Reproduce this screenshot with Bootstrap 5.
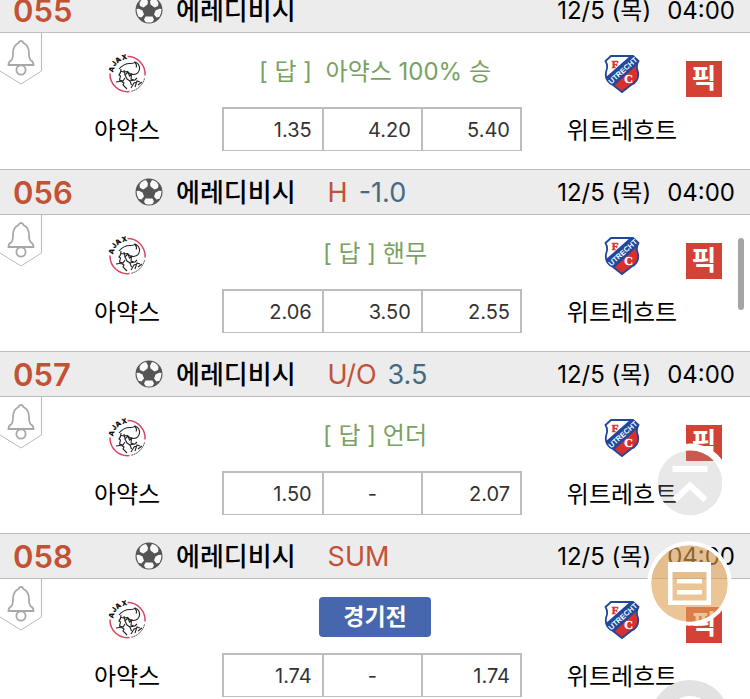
<!DOCTYPE html>
<html lang="ko">
<head>
<meta charset="utf-8">
<meta name="viewport" content="width=device-width, initial-scale=1">
<title>에레디비시</title>
<link href="https://cdn.jsdelivr.net/npm/bootstrap@5.3.0/dist/css/bootstrap.min.css" rel="stylesheet">
<style>
body{font-family:Inter,"Noto Sans CJK KR",sans-serif;color:#000;background:#fff}
.screen{height:100vh;overflow:hidden}
.match-list{margin-top:-13px}
.match-head{height:46px;padding:0 15px 0 13px;background:#ececec;border-top:1px solid #bdbdbd;border-bottom:1px solid #bdbdbd;line-height:42px}
.match-head span,.match-head time{padding-top:2px}
.match-no{width:122px;font-size:31px;font-weight:600;color:#c35135}
.league{font-size:26px;font-weight:500;margin-left:13px}
.market{font-size:27px;color:#c35135;margin-left:32px}
.market-line{font-size:27px;color:#456a80;margin-left:11px}
.kickoff{font-size:24px}
.match-body{height:136px;display:grid;grid-template-columns:37fr 50fr 38fr}
.home-team{padding:21px 0 0 32px}
.away-team{padding:21px 0 0 36px}
.team-name{font-size:24px;line-height:36px;margin-top:19px}
.bell-tab{position:absolute;left:0;top:0;line-height:0}
.answer{height:74px;font-size:24px;color:#79a15f;line-height:78px}
.answer-space{padding-left:6px}
.status-btn{width:112px;height:40px;margin:18px 0 16px 6px;background:#4667ae;border-radius:4px;font-size:23px;font-weight:700;line-height:40px}
.odds{height:44px;border:solid #bdbdbd;border-width:2px 2px 1px}
.odds button+button{border-left:2px solid #bdbdbd}
.odds button{font-size:20px;color:#333;padding:0 10px}
.pick{width:36px;height:36px;margin:28px 28px 0 0;background:#d44235;font-size:27px;font-weight:700;line-height:34px}
.floats{position:fixed;right:18px;bottom:-61px;width:85px}
.floats button{line-height:0}
.float-list{margin-top:18px;margin-bottom:54px}
.scroll-thumb{position:fixed;right:6px;top:238px;width:6px;height:72px;border-radius:3px;background:#a5a5a5}
</style>
<script src="https://cdn.jsdelivr.net/npm/bootstrap@5.3.0/dist/js/bootstrap.bundle.min.js"></script>
</head>
<body>
<svg class="position-absolute" width="0" height="0" aria-hidden="true">
  <defs><clipPath id="shield"><path d="M7 2H29L34.500 7Q31.500 12 34 18 35.500 27 27 31L18 38 9 31Q.5 27 2 18 4.500 12 1.500 7z"/></clipPath></defs>
  <symbol id="ball" viewBox="0 0 28 28">
    <circle cx="14" cy="14" r="13.500" fill="#555"/>
    <g fill="#fafafa"><path d="M6 4.500Q8.500 2 11 2L13 5.500 12.500 8.500 8.500 11.500 5 10 4.500 7z"/><path d="M22 4.500Q19.500 2 17 2L15 5.500 15.500 8.500 19.500 11.500 23 10 23.500 7z"/><path d="M1.500 13L4 12.800 7.500 14.500 9 18.500 6.500 21.500 3.500 20.800Q1.500 17.500 1.500 13z"/><path d="M26.500 13L24 12.800 20.500 14.500 19 18.500 21.500 21.500 24.500 20.800Q26.500 17.500 26.500 13z"/><path d="M10.500 20.500H17.500L19 23.500 17.500 26Q14 27.200 10.500 26L9 23.500z"/></g>
  </symbol>
  <symbol id="bell" viewBox="0 0 42 52">
    <path d="M41.500 0V38L21 51 0 38" fill="#fff" stroke="#b9b9b9"/>
    <g fill="none" stroke="#a8a8a8" stroke-width="1.800"><path d="M21 8q2 0 2.500 2Q29 12.500 29 20q0 6 2 7.500 2.500 1.200 2.500 4.500H8.500q0-3.300 2.500-4.500 2-1.500 2-7.500 0-7.500 5.500-10 .5-2 2.500-2z"/><circle cx="21" cy="37" r="4.600"/></g>
  </symbol>
  <symbol id="ajax" viewBox="0 0 40 40">
    <path d="M20.500 2.500A17.500 17.500 0 0 1 38 21.500M3 19.500A17.500 17.500 0 0 0 22.500 37.500" fill="none" stroke="#d8475f" stroke-width="1.500"/>
    <path d="M37.500 24.500A17.500 17.500 0 0 1 24.500 37.200" fill="none" stroke="#333" stroke-dasharray="1.500 .7"/>
    <g fill="#111" font-family="Inter,sans-serif" font-size="7" font-weight="900" text-anchor="middle"><text transform="translate(6.800 16) rotate(-72)">A</text><text transform="translate(9 11) rotate(-54)">J</text><text transform="translate(12.600 7.800) rotate(-36)">A</text><text transform="translate(17.800 5.500) rotate(-14)">X</text></g>
    <path d="M12 15q5-6 12-5.500 3 0 4-1.500 5 2 4.500 7-.5 5-6 5.500-4 0-6-3-4 1-7-.5M27.500 8q3 3 1.500 5.500M14 15q0 4-2 6l1.500 1-1 4 3.500 1 2-3M17 16l1 5 3-3 1.500 4 2-1.500-.5 4.500 3 1M18 21l2 4 3 2 1.500 4M9 28q5-1.500 8 1l-1 2 4 4M24 34l3-5 3-1M28 33l2-6 3 1M31 31l4-3M22 27l6-1 2-2" fill="none" stroke="#222" stroke-width="1.100"/>
  </symbol>
  <symbol id="utrecht" viewBox="0 0 36 40">
    <g clip-path="url(#shield)"><path d="M0 0H36V40H0z" fill="#fff"/><path d="M36 6V40H10L6 31z" fill="#d9302c"/><path d="M0 25L27 1 38 6 9 33z" fill="#21479a"/></g>
    <path d="M7 2H29L34.500 7Q31.500 12 34 18 35.500 27 27 31L18 38 9 31Q.5 27 2 18 4.500 12 1.500 7z" fill="none" stroke="#21479a" stroke-width="1.800"/>
    <g font-family="Liberation Serif,serif" font-weight="700" text-anchor="middle"><text x="11" y="14" font-size="11" fill="#dc3030" stroke="#dc3030" stroke-width=".5">F</text><text x="24.500" y="29" font-size="12" fill="#fff" stroke="#fff" stroke-width=".4">C</text><text transform="translate(20.500 18.500) rotate(-42)" font-family="Liberation Sans,sans-serif" font-size="7.500" fill="#fff">UTRECHT</text></g>
  </symbol>
</svg>

<main class="screen">
<div class="match-list">
  <section>
    <header class="match-head d-flex align-items-center">
      <span class="match-no">055</span><svg width="28" height="28" aria-hidden="true"><use href="#ball"/></svg><span class="league">에레디비시</span>
      <span class="kickoff ms-auto">12/5 (목)</span><time class="kickoff ms-3">04:00</time>
    </header>
    <div class="match-body position-relative">
      <button class="bell-tab btn p-0 border-0" aria-label="알림"><svg width="42" height="52"><use href="#bell"/></svg></button>
      <div class="home-team d-flex flex-column align-items-center"><svg width="40" height="40" aria-hidden="true"><use href="#ajax"/></svg><div class="team-name">아약스</div></div>
      <div><div class="answer answer-space text-center">[ 답 ]&nbsp; 아약스 100% 승</div>
        <div class="odds d-flex"><button class="btn border-0 rounded-0 flex-fill w-100 text-end">1.35</button><button class="btn border-top-0 border-end-0 border-bottom-0 rounded-0 flex-fill w-100 text-end">4.20</button><button class="btn border-top-0 border-end-0 border-bottom-0 rounded-0 flex-fill w-100 text-end">5.40</button></div></div>
      <div class="d-flex"><div class="away-team flex-fill d-flex flex-column align-items-center"><svg width="36" height="40" aria-hidden="true"><use href="#utrecht"/></svg><div class="team-name text-nowrap">위트레흐트</div></div><button class="pick btn p-0 border-0 rounded-0 text-white">픽</button></div>
    </div>
  </section>
  <section>
    <header class="match-head d-flex align-items-center">
      <span class="match-no">056</span><svg width="28" height="28" aria-hidden="true"><use href="#ball"/></svg><span class="league">에레디비시</span><span class="market">H</span><span class="market-line">-1.0</span>
      <span class="kickoff ms-auto">12/5 (목)</span><time class="kickoff ms-3">04:00</time>
    </header>
    <div class="match-body position-relative">
      <button class="bell-tab btn p-0 border-0" aria-label="알림"><svg width="42" height="52"><use href="#bell"/></svg></button>
      <div class="home-team d-flex flex-column align-items-center"><svg width="40" height="40" aria-hidden="true"><use href="#ajax"/></svg><div class="team-name">아약스</div></div>
      <div><div class="answer answer-space text-center">[ 답 ] 핸무</div>
        <div class="odds d-flex"><button class="btn border-0 rounded-0 flex-fill w-100 text-end">2.06</button><button class="btn border-top-0 border-end-0 border-bottom-0 rounded-0 flex-fill w-100 text-end">3.50</button><button class="btn border-top-0 border-end-0 border-bottom-0 rounded-0 flex-fill w-100 text-end">2.55</button></div></div>
      <div class="d-flex"><div class="away-team flex-fill d-flex flex-column align-items-center"><svg width="36" height="40" aria-hidden="true"><use href="#utrecht"/></svg><div class="team-name text-nowrap">위트레흐트</div></div><button class="pick btn p-0 border-0 rounded-0 text-white">픽</button></div>
    </div>
  </section>
  <section>
    <header class="match-head d-flex align-items-center">
      <span class="match-no">057</span><svg width="28" height="28" aria-hidden="true"><use href="#ball"/></svg><span class="league">에레디비시</span><span class="market">U/O</span><span class="market-line">3.5</span>
      <span class="kickoff ms-auto">12/5 (목)</span><time class="kickoff ms-3">04:00</time>
    </header>
    <div class="match-body position-relative">
      <button class="bell-tab btn p-0 border-0" aria-label="알림"><svg width="42" height="52"><use href="#bell"/></svg></button>
      <div class="home-team d-flex flex-column align-items-center"><svg width="40" height="40" aria-hidden="true"><use href="#ajax"/></svg><div class="team-name">아약스</div></div>
      <div><div class="answer answer-space text-center">[ 답 ] 언더</div>
        <div class="odds d-flex"><button class="btn border-0 rounded-0 flex-fill w-100 text-end">1.50</button><button class="btn border-top-0 border-end-0 border-bottom-0 rounded-0 flex-fill w-100">-</button><button class="btn border-top-0 border-end-0 border-bottom-0 rounded-0 flex-fill w-100 text-end">2.07</button></div></div>
      <div class="d-flex"><div class="away-team flex-fill d-flex flex-column align-items-center"><svg width="36" height="40" aria-hidden="true"><use href="#utrecht"/></svg><div class="team-name text-nowrap">위트레흐트</div></div><button class="pick btn p-0 border-0 rounded-0 text-white">픽</button></div>
    </div>
  </section>
  <section>
    <header class="match-head d-flex align-items-center">
      <span class="match-no">058</span><svg width="28" height="28" aria-hidden="true"><use href="#ball"/></svg><span class="league">에레디비시</span><span class="market">SUM</span>
      <span class="kickoff ms-auto">12/5 (목)</span><time class="kickoff ms-3">04:00</time>
    </header>
    <div class="match-body position-relative">
      <button class="bell-tab btn p-0 border-0" aria-label="알림"><svg width="42" height="52"><use href="#bell"/></svg></button>
      <div class="home-team d-flex flex-column align-items-center"><svg width="40" height="40" aria-hidden="true"><use href="#ajax"/></svg><div class="team-name">아약스</div></div>
      <div><div class="d-flex justify-content-center"><button class="status-btn btn p-0 border-0 text-white">경기전</button></div>
        <div class="odds d-flex"><button class="btn border-0 rounded-0 flex-fill w-100 text-end">1.74</button><button class="btn border-top-0 border-end-0 border-bottom-0 rounded-0 flex-fill w-100">-</button><button class="btn border-top-0 border-end-0 border-bottom-0 rounded-0 flex-fill w-100 text-end">1.74</button></div></div>
      <div class="d-flex"><div class="away-team flex-fill d-flex flex-column align-items-center"><svg width="36" height="40" aria-hidden="true"><use href="#utrecht"/></svg><div class="team-name text-nowrap">위트레흐트</div></div><button class="pick btn p-0 border-0 rounded-0 text-white">픽</button></div>
    </div>
  </section>
</div>
</main>

<div class="scroll-thumb"></div>
<nav class="floats d-flex flex-column align-items-center" aria-label="바로가기">
  <button class="btn p-0 border-0 rounded-circle" aria-label="맨 위로"><svg width="80" height="80" viewBox="0 0 80 80"><circle cx="40" cy="40" r="32.500" fill="#a3a3a3" fill-opacity=".25"/><circle cx="40" cy="40" r="36" fill="none" stroke="#fff" stroke-width="7"/><path d="M22.500 26H57.500M24.500 57L40 42.500 55.500 57" fill="none" stroke="#fff" stroke-width="6"/></svg></button>
  <button class="float-list btn p-0 border-0 rounded-circle" aria-label="목록"><svg width="85" height="85" viewBox="0 0 85 85"><circle cx="42.500" cy="42.500" r="38.500" fill="#e0a256" fill-opacity=".62"/><circle cx="42.500" cy="42.500" r="40.300" fill="none" stroke="#fff" stroke-width="4"/><path d="M21 21H64V64H21zM25.500 31V59.500H59.500V31z" fill="#fff" fill-rule="evenodd"/><path d="M30 38H55V42.500H30zM30 49H55V53.500H30z" fill="#fff"/></svg></button>
  <button class="btn p-0 border-0 rounded-circle" aria-label="설정"><svg width="80" height="80" viewBox="0 0 80 80"><circle cx="40" cy="40" r="40" fill="#e2e2e2"/><circle cx="40" cy="41" r="25" fill="#fff"/></svg></button>
</nav>
</body>
</html>
